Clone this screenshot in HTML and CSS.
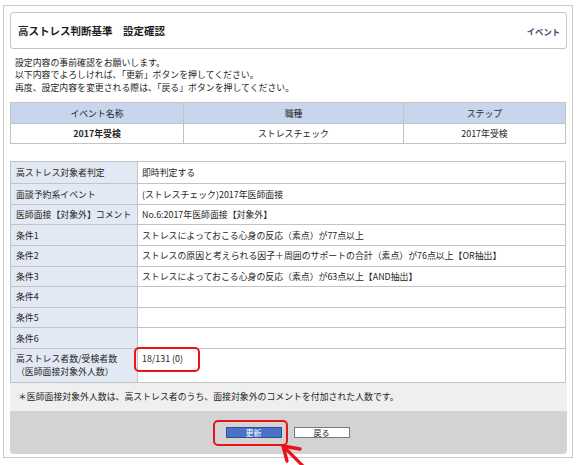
FILE: index.html
```html
<!DOCTYPE html>
<html lang="ja">
<head>
<meta charset="utf-8">
<link rel="stylesheet" href="styles.css">
</head>
<body>
<div class="frame">
  <div class="head">
    <h1 class="title">高ストレス判断基準　設定確認</h1>
    <a class="evt-link">イベント</a>
  </div>
  <div class="intro">
    <p>設定内容の事前確認をお願いします。</p>
    <p>以下内容でよろしければ、「更新」ボタンを押してください。</p>
    <p>再度、設定内容を変更される際は、「戻る」ボタンを押してください。</p>
  </div>
  <table class="evtable">
    <colgroup><col class="c1"><col class="c2"><col class="c3"></colgroup>
    <tr class="hdr"><th>イベント名称</th><th>職種</th><th>ステップ</th></tr>
    <tr class="dat"><td class="bold">2017年受検</td><td>ストレスチェック</td><td>2017年受検</td></tr>
  </table>
  <table class="detail">
    <colgroup><col class="lbl"><col class="val"></colgroup>
    <tr class="first"><th>高ストレス対象者判定</th><td>即時判定する</td></tr>
    <tr><th>面談予約系イベント</th><td>(ストレスチェック)2017年医師面接</td></tr>
    <tr><th>医師面接【対象外】コメント</th><td>No.6:2017年医師面接【対象外】</td></tr>
    <tr><th>条件1</th><td>ストレスによっておこる心身の反応（素点）が77点以上</td></tr>
    <tr><th>条件2</th><td>ストレスの原因と考えられる因子＋周囲のサポートの合計（素点）が76点以上【OR抽出】</td></tr>
    <tr><th>条件3</th><td>ストレスによっておこる心身の反応（素点）が63点以上【AND抽出】</td></tr>
    <tr><th>条件4</th><td></td></tr>
    <tr><th>条件5</th><td></td></tr>
    <tr><th>条件6</th><td></td></tr>
    <tr class="tall"><th>高ストレス者数/受検者数<br>（医師面接対象外人数）</th><td class="count"><span class="ring ring-count"></span>18/131 (0)</td></tr>
  </table>
  <div class="note">＊医師面接対象外人数は、高ストレス者のうち、面接対象外のコメントを付加された人数です。</div>
  <div class="actions">
    <span class="btn-wrap"><span class="ring ring-btn"></span><button class="btn primary">更新</button></span>
    <button class="btn">戻る</button>
  </div>
</div>
<svg class="arrow" width="32" height="26" viewBox="0 0 32 26">
  <path d="M5 4 L26 25" stroke="#e8141c" stroke-width="3.2" stroke-linecap="round" fill="none"/>
  <path d="M22 7 L5 4 L9 19" stroke="#e8141c" stroke-width="3.4" stroke-linecap="round" stroke-linejoin="round" fill="none"/>
</svg>
</body>
</html>
```

FILE: styles.css
```css
* { box-sizing: border-box; }
html, body { margin: 0; padding: 0; background: #ffffff; }
body {
  font-family: "Noto Sans CJK JP", "Noto Sans", sans-serif;
  font-size: 8.9px;
  color: #262626;
  width: 578px;
  height: 465px;
  position: relative;
  overflow: hidden;
}
.frame {
  margin: 5px 0 0 3px;
  width: 570px;
  height: 453px;
  border: 1px solid #c9c9c9;
  padding: 6px 5px 0 6px;
}
.head {
  height: 37px;
  border: 1px solid #c4c4c4;
  border-radius: 3px;
  display: flex;
  align-items: center;
  justify-content: space-between;
  padding: 0 6px 0 7px;
}
.title {
  margin: 0;
  font-size: 10.5px;
  font-weight: bold;
  color: #1e1e1e;
}
.evt-link {
  font-size: 8.3px;
  font-weight: bold;
  color: #3a4666;
}
.intro {
  padding: 8px 0 0 5px;
  line-height: 12.4px;
}
.intro p { margin: 0; }
table {
  border-collapse: collapse;
  width: 556px;
  table-layout: fixed;
}
.evtable { margin-top: 8px; }
.evtable col.c1 { width: 173px; }
.evtable col.c2 { width: 220px; }
.evtable th, .evtable td {
  border: 1px solid #c3c3c3;
  text-align: center;
  padding: 0;
  font-weight: normal;
}
.evtable .hdr th { background: #c7d6ec; height: 21px; }
.evtable .dat td { height: 20px; }
.evtable .bold { font-weight: bold; }
.detail { margin-top: 17px; }
.detail col.lbl { width: 127px; }
.detail th, .detail td {
  border: 1px solid #c3c3c3;
  height: 20.6px;
  padding: 0 0 0 4px;
  text-align: left;
  font-weight: normal;
  white-space: nowrap;
  overflow: visible;
}
.detail th {
  background: #e3e9f4;
  padding-left: 5px;
}
.detail tr.first th, .detail tr.first td { height: 22px; }
.detail .tall th, .detail .tall td {
  height: 34px;
  vertical-align: top;
  line-height: 13.5px;
  padding-top: 3px;
}
.detail .count { position: relative; }
.ring {
  position: absolute;
  border: 2.2px solid #e8141c;
  border-radius: 5px;
  pointer-events: none;
}
.ring-count {
  left: -4px;
  top: -2px;
  width: 66px;
  height: 25px;
}
.note {
  height: 28px;
  background: #efefef;
  display: flex;
  align-items: center;
  padding-left: 8px;
}
.actions {
  height: 43px;
  background: #d3d3d3;
  border-radius: 0 0 4px 4px;
  display: flex;
  align-items: center;
  justify-content: center;
  gap: 12px;
  padding-right: 2px;
}
.btn-wrap { position: relative; display: flex; }
.ring-btn {
  left: -13px;
  right: -6px;
  top: -7px;
  bottom: -8px;
}
.btn {
  width: 56px;
  height: 11px;
  padding: 0;
  margin: 0;
  font-family: "Noto Sans CJK JP", sans-serif;
  font-size: 8px;
  line-height: 9px;
  border: 1px solid #7a7a7a;
  background: #ffffff;
  color: #222;
  border-radius: 0;
}
.btn.primary {
  background: #4a72c8;
  border-color: #2f4f8f;
  color: #ffffff;
}
.arrow {
  position: absolute;
  left: 278px;
  top: 442px;
}
```
